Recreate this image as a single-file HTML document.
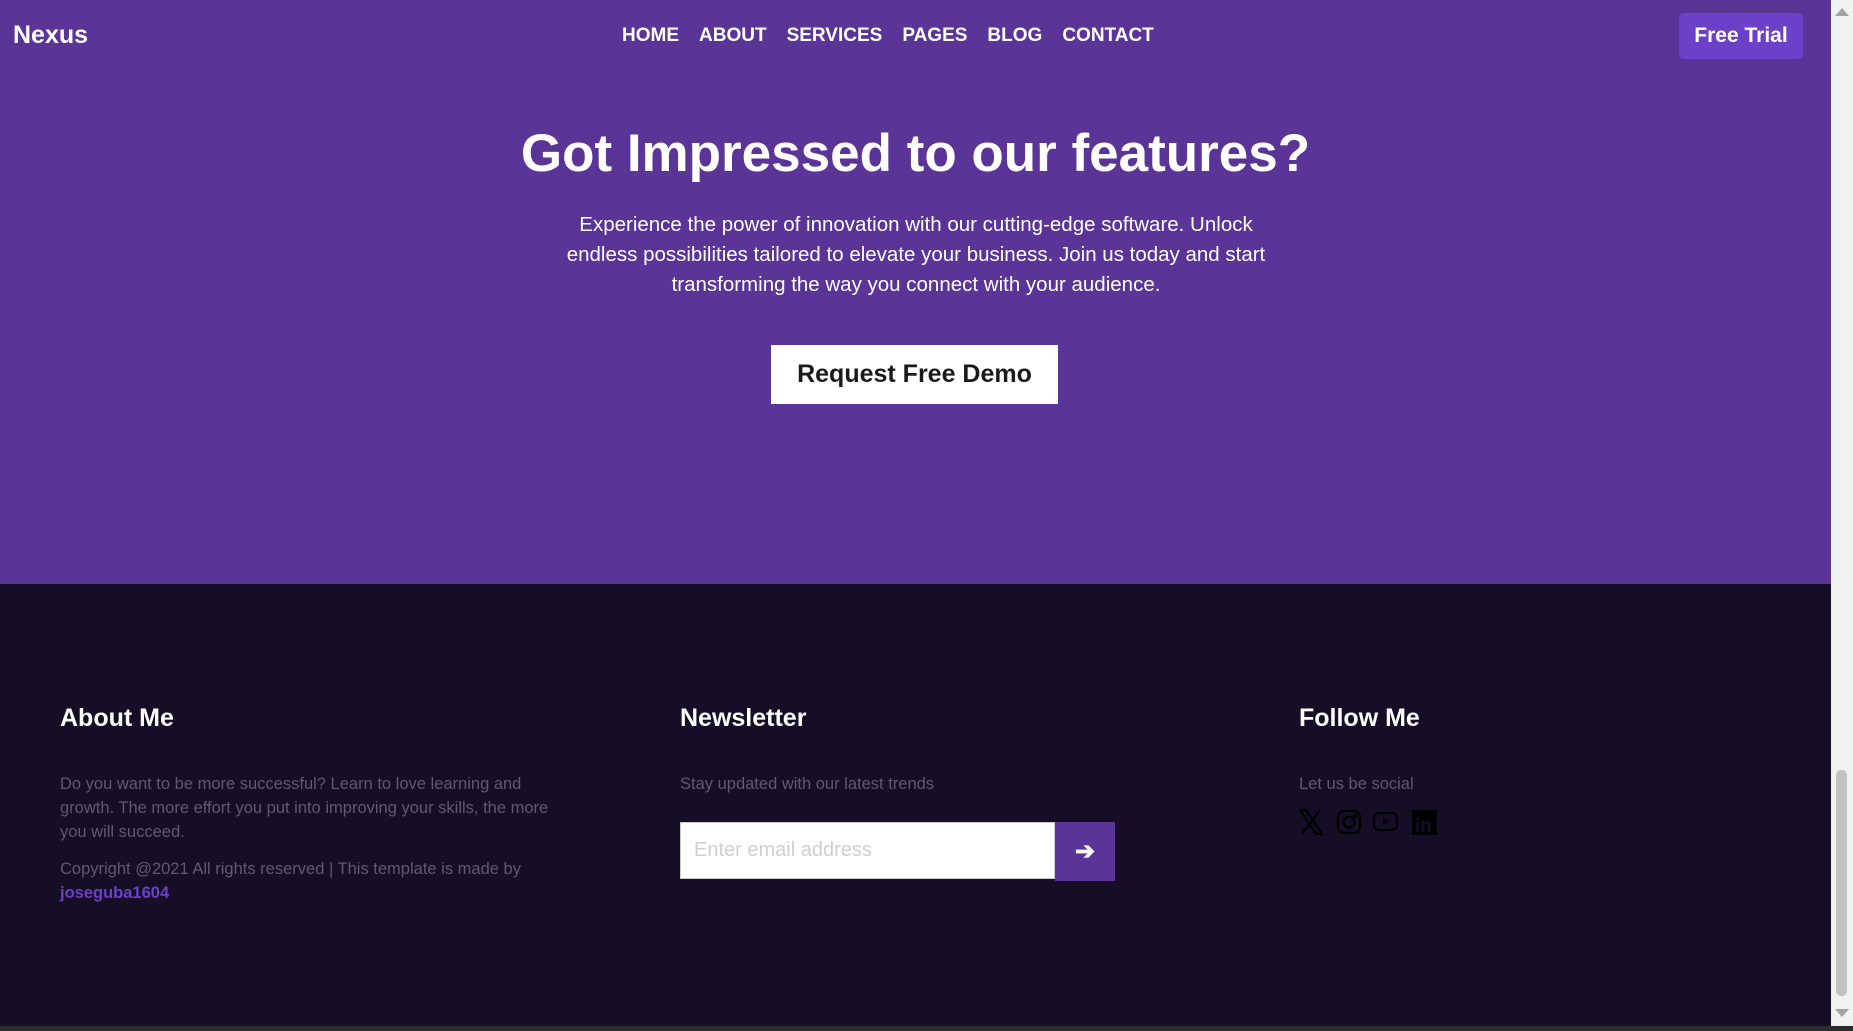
<!DOCTYPE html>
<html><head><meta charset="utf-8"><style>
*{margin:0;padding:0;box-sizing:border-box}
body{width:1853px;height:1031px;overflow:hidden;background:#2b2b2b;font-family:"Liberation Sans",sans-serif;position:relative}
.hero{position:absolute;left:0;top:0;width:1831px;height:584px;background:#5a3597}
.foot{position:absolute;left:0;top:584px;width:1831px;height:442px;background:#150e26}
.sb{position:absolute;left:1831px;top:0;width:22px;height:1026px;background:#f1f1f1}
.thumb{position:absolute;left:1836px;top:770px;width:11px;height:226px;background:#c1c1c1;border-radius:6px}
.abs{position:absolute}
.nav a{color:#fff;font-weight:bold;font-size:19px;margin-right:20px;text-decoration:none}
h4{position:absolute;color:#fff;font-size:25px;font-weight:bold;top:704px}
.t{position:absolute;color:#5f5a6e;font-size:16.5px;line-height:24px}
</style></head><body>
<div class="hero"></div>
<div class="foot"></div>
<div class="sb"></div>
<div class="abs" style="left:1835px;top:8px;width:0;height:0;border-left:7px solid transparent;border-right:7px solid transparent;border-bottom:8px solid #a3a3a3"></div>
<div class="abs" style="left:1835px;top:1009px;width:0;height:0;border-left:7px solid transparent;border-right:7px solid transparent;border-top:8px solid #a3a3a3"></div>
<div class="thumb"></div>
<div class="abs" style="left:13px;top:21px;color:#fff;font-weight:bold;font-size:25px">Nexus</div>
<div class="abs nav" style="left:622px;top:25px;white-space:nowrap"><a>HOME</a><a>ABOUT</a><a>SERVICES</a><a>PAGES</a><a>BLOG</a><a>CONTACT</a></div>
<div class="abs" style="left:1679px;top:13px;width:124px;height:46px;background:#6c40c9;border-radius:5px;color:#fff;font-weight:bold;font-size:21px;text-align:center;line-height:46px">Free Trial</div>
<div class="abs" style="left:0;width:1831px;top:123px;text-align:center;color:#fff;font-weight:bold;font-size:53px">Got Impressed to our features?</div>
<div class="abs" style="left:545px;width:742px;top:210px;text-align:center;color:#fff;font-size:20.5px;line-height:30px;padding:0 12px">Experience the power of innovation with our cutting-edge software. Unlock endless possibilities tailored to elevate your business. Join us today and start transforming the way you connect with your audience.</div>
<div class="abs" style="left:771px;top:345px;width:287px;height:59px;background:#fff;color:#1a1a1a;font-weight:bold;font-size:25px;text-align:center;line-height:59px">Request Free Demo</div>
<h4 style="left:60px">About Me</h4>
<h4 style="left:680px">Newsletter</h4>
<h4 style="left:1299px">Follow Me</h4>
<div class="t" style="left:60px;top:772px;width:490px">Do you want to be more successful? Learn to love learning and growth. The more effort you put into improving your skills, the more you will succeed.</div>
<div class="t" style="left:60px;top:857px;width:540px">Copyright @2021 All rights reserved | This template is made by<br><span style="color:#6c40c9;font-weight:bold">joseguba1604</span></div>
<div class="t" style="left:680px;top:772px">Stay updated with our latest trends</div>
<div class="abs" style="left:680px;top:822px;width:375px;height:57px;background:#fff;border:1px solid #ccc;color:#cfcfcf;font-size:20px;line-height:55px;padding-left:13px">Enter email address</div>
<div class="abs" style="left:1055px;top:822px;width:60px;height:59px;background:#5a3597;color:#fff;font-size:24px;font-weight:bold;text-align:center;line-height:59px">➔</div>
<div class="t" style="left:1299px;top:772px">Let us be social</div>
<svg class="abs" style="left:1299px;top:808px" width="140" height="28" viewBox="0 0 140 28" fill="none" stroke="#000" stroke-width="2.2">
<path d="M1 2h6l16 24h-6zM21 2L3 26"/>
<rect x="39" y="3" width="22" height="22" rx="6"/><circle cx="50" cy="14" r="5.5"/><circle cx="56" cy="8" r="1" fill="#000"/>
<rect x="75" y="5" width="23" height="17" rx="5"/><path d="M84 9.5v8l6-4z" fill="#000" stroke="none"/>
<rect x="113" y="2" width="25" height="25" fill="#000" stroke="none"/>
<text x="116" y="24" fill="#150e26" stroke="none" font-family="Liberation Sans" font-weight="bold" font-size="19">in</text>
</svg>
</body></html>
